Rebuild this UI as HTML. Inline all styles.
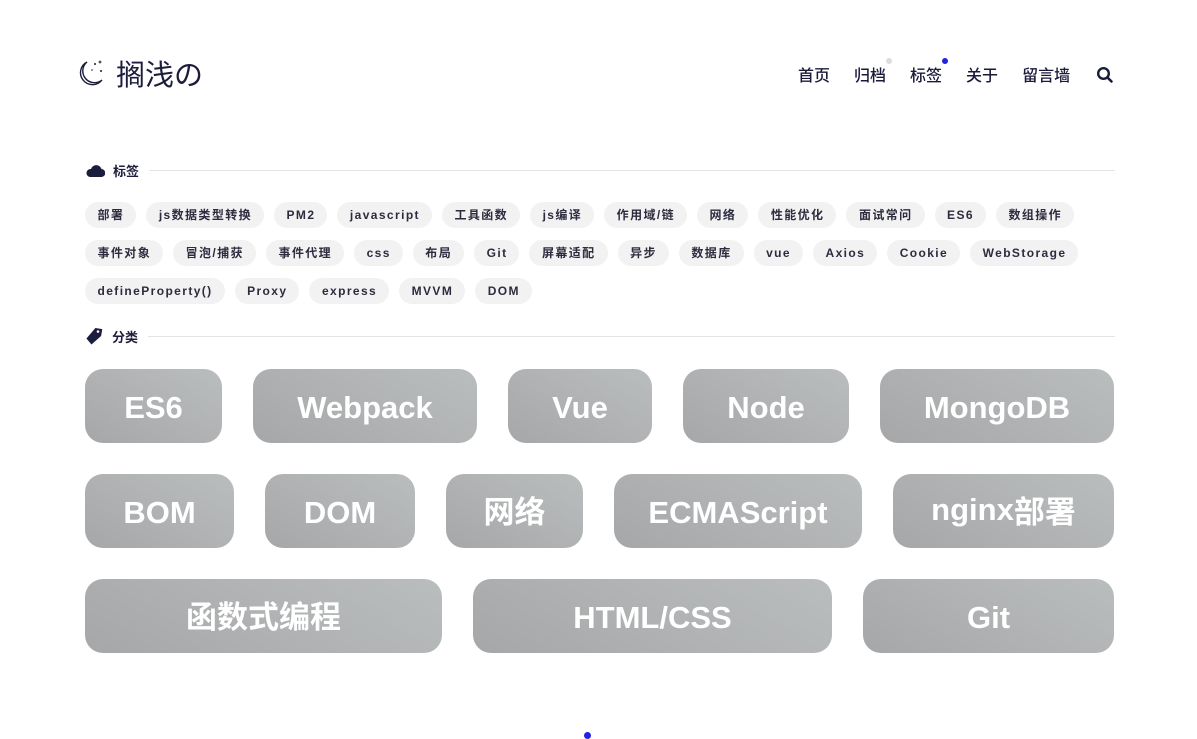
<!DOCTYPE html>
<html><head><meta charset="utf-8"><style>
*{margin:0;padding:0;box-sizing:border-box}
body{width:1197px;height:737px;background:#fff;font-family:"Liberation Sans","Noto Sans CJK SC",sans-serif;color:#1e1e3a;position:relative;overflow:hidden}
.logo{position:absolute;left:76px;top:52px;display:flex;align-items:center}
.logo span{font-size:29px;margin-left:10px;color:#1c1c3c;font-family:"Noto Sans CJK SC",sans-serif}
.nav{position:absolute;top:62px;left:798px;display:flex;font-size:16px;font-family:"Noto Sans CJK SC",sans-serif;font-weight:500}
.nav a{margin-right:24px;position:relative;color:#1a1a3a;text-decoration:none;line-height:24px}
.dot{position:absolute;width:6px;height:6px;border-radius:50%;top:-4px;right:-6px}
.sec{position:absolute;left:86px;display:flex;align-items:center;width:1029px}
.sec b{font-size:13px;margin-left:8px;font-weight:700;font-family:"Noto Sans CJK SC",sans-serif}
.sec i{flex:1;height:1px;background:#e3e3e3;margin-left:10px}
.tags{position:absolute;left:85px;top:202px;width:1032px;display:flex;flex-wrap:wrap;gap:12px 10px}
.tags span{height:26px;line-height:26px;padding:0 12px 0 12.5px;background:#f2f2f3;border-radius:13px;font-size:12px;font-weight:700;letter-spacing:1.4px;color:#2c2c3e}
.c{position:absolute;height:74px;border-radius:18px;background:linear-gradient(30deg,#a6a7a8,#babdbe);color:#fff;font-weight:700;font-size:31px;display:flex;align-items:center;justify-content:center;font-family:"Liberation Sans",sans-serif;line-height:1;padding-top:3px}
.c.z{font-family:"Noto Sans CJK SC",sans-serif;padding-top:0;padding-bottom:4px}
.c.z span{font-family:"Liberation Sans",sans-serif}
</style></head><body>
<div class="logo"><svg width="30" height="32" viewBox="0 0 30 32"><path d="M11 5 A12 12 0 1 0 26 23 A10 10 0 0 1 11 5Z" fill="none" stroke="#1c1c3c" stroke-width="1.4"/><circle cx="19" cy="7" r="1" fill="#1c1c3c"/><path d="M24 3l.6 1.4 1.4.6-1.4.6-.6 1.4-.6-1.4-1.4-.6 1.4-.6z" fill="#1c1c3c"/><circle cx="25" cy="14" r="1" fill="#1c1c3c"/><circle cx="16" cy="13" r=".8" fill="#1c1c3c"/></svg><span>搁浅の</span></div>
<div class="nav"><a>首页</a><a>归档<i class="dot" style="background:#ddd"></i></a><a>标签<i class="dot" style="background:#2222e0"></i></a><a>关于</a><a>留言墙</a>
<svg width="18" height="18" viewBox="0 0 18 18" style="margin-top:4px;margin-left:2px"><circle cx="7.5" cy="7.5" r="5.3" fill="none" stroke="#1a1a3a" stroke-width="2.4"/><path d="M11.5 11.5l4 4" stroke="#1a1a3a" stroke-width="2.6" stroke-linecap="round"/></svg></div>
<div class="sec" style="top:161px"><svg width="19" height="14" viewBox="0 0 19 14"><path d="M4 13h11a4 4 0 0 0 .5-8A5.5 5.5 0 0 0 5 5a4 4 0 0 0-1 8z" fill="#1c1c3c"/></svg><b>标签</b><i></i></div>
<div class="tags"><span>部署</span><span>js数据类型转换</span><span>PM2</span><span>javascript</span><span>工具函数</span><span>js编译</span><span>作用域/链</span><span>网络</span><span>性能优化</span><span>面试常问</span><span>ES6</span><span>数组操作</span><span>事件对象</span><span>冒泡/捕获</span><span>事件代理</span><span>css</span><span>布局</span><span>Git</span><span>屏幕适配</span><span>异步</span><span>数据库</span><span>vue</span><span>Axios</span><span>Cookie</span><span>WebStorage</span><span>defineProperty()</span><span>Proxy</span><span>express</span><span>MVVM</span><span>DOM</span></div>
<div class="sec" style="top:327px"><svg width="18" height="19" viewBox="0 0 18 19"><path d="M8 1h7v7l-8 10-6-5z" fill="#1c1c3c" transform="rotate(10 9 9)"/><circle cx="12" cy="4.5" r="1.3" fill="#fff"/></svg><b>分类</b><i></i></div>
<div class="c" style="left:85px;top:369px;width:137px">ES6</div>
<div class="c" style="left:253px;top:369px;width:224px">Webpack</div>
<div class="c" style="left:508px;top:369px;width:144px">Vue</div>
<div class="c" style="left:683px;top:369px;width:166px">Node</div>
<div class="c" style="left:880px;top:369px;width:234px">MongoDB</div>
<div class="c" style="left:85px;top:474px;width:149px">BOM</div>
<div class="c" style="left:265px;top:474px;width:150px">DOM</div>
<div class="c z" style="left:446px;top:474px;width:137px">网络</div>
<div class="c" style="left:614px;top:474px;width:248px">ECMAScript</div>
<div class="c z" style="left:893px;top:474px;width:221px"><span>nginx</span>部署</div>
<div class="c z" style="left:85px;top:579px;width:357px">函数式编程</div>
<div class="c" style="left:473px;top:579px;width:359px">HTML/CSS</div>
<div class="c" style="left:863px;top:579px;width:251px">Git</div>
<div style="position:absolute;left:584px;top:732px;width:7px;height:7px;border-radius:50%;background:#2222e0"></div>
</body></html>
